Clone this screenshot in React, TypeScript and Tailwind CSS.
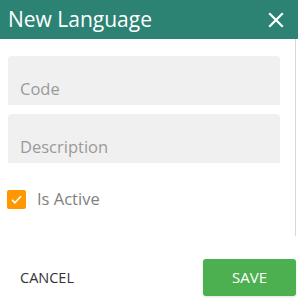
import React, { useState } from 'react';

export default function App() {
  const [active, setActive] = useState(true);

  return (
    <div className="w-[298px] h-[300px] bg-white overflow-hidden" style={{ fontFamily: '"Open Sans", sans-serif' }}>
      <div className="h-[39px] bg-[#2c8373] flex items-center justify-between pl-2 pr-[14px]">
        <h2 className="text-[21px] text-white leading-none">New Language</h2>
        <svg className="w-[16px] h-[16px]" viewBox="0 0 16 16" fill="none" stroke="white" strokeWidth={2.2} strokeLinecap="square">
          <path d="M2 2l12 12M14 2L2 14" />
        </svg>
      </div>

      <div className="w-[296px] h-[197px] border-r border-[#d8d8d8] pt-[17px] pl-2 pr-[15px]">
        <div className="flex flex-col gap-[9px]">
          <div className="h-[49px] bg-[#f0f0f0] rounded-t-[4px] flex items-end pb-[3px] pl-3">
            <span className="text-[16.5px] text-[#9a9a9a]">Code</span>
          </div>
          <div className="h-[49px] bg-[#f0f0f0] rounded-t-[4px] flex items-end pb-[3px] pl-3">
            <span className="text-[16.5px] text-[#9a9a9a]">Description</span>
          </div>
        </div>

        <label className="flex items-center mt-[24px] -ml-px gap-[11px] cursor-pointer" onClick={() => setActive(!active)}>
          <span className={`w-[19px] h-[19px] rounded-[2px] flex items-center justify-center ${active ? 'bg-[#ff9800]' : 'border-2 border-gray-400'}`}>
            {active && (
              <svg className="w-[13px] h-[13px]" viewBox="0 0 16 16" fill="none" stroke="white" strokeWidth={2.2}>
                <path d="M2.5 8.5l3.5 3.5 7.5-8" />
              </svg>
            )}
          </span>
          <span className="text-[16.5px] text-[#808080]">Is Active</span>
        </label>
      </div>

      <div className="flex items-center justify-between pl-5 pr-[2px] mt-[23px]">
        <button className="text-[14.5px] text-[#333] uppercase">Cancel</button>
        <button className="w-[93px] h-[37px] bg-[#4caf50] rounded-[3px] text-[15px] text-white uppercase shadow-sm">Save</button>
      </div>
    </div>
  );
}
